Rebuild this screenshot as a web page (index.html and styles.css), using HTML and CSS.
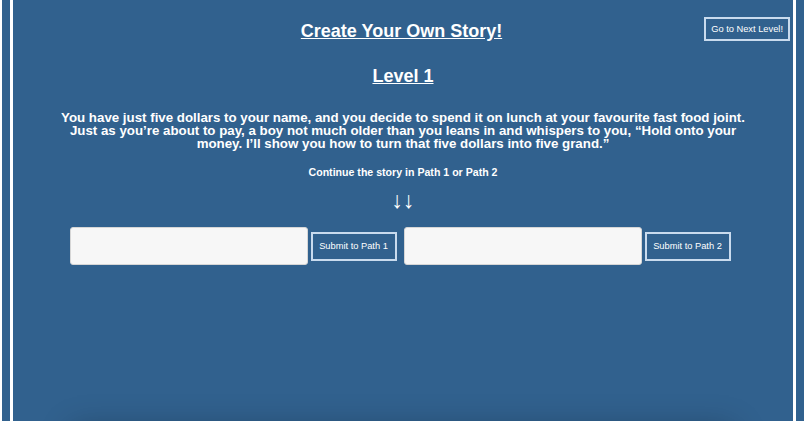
FILE: index.html
```html
<!DOCTYPE html>
<html lang="en">
<head>
    <meta charset="UTF-8">
    <meta name="viewport" content="width=device-width, initial-scale=1.0">
    <title>Create Your Own Story!</title>
    <link rel="stylesheet" href="styles.css">
</head>
<body>
    <div class="stage">
        <header class="top-bar">
            <h1>Create Your Own Story!</h1>
            <button type="button" class="btn next-btn">Go to Next Level!</button>
        </header>

        <h2>Level 1</h2>

        <p class="prompt">You have just five dollars to your name, and you decide to spend it on lunch at your favourite fast food joint. Just as you’re about to pay, a boy not much older than you leans in and whispers to you, “Hold onto your money. I’ll show you how to turn that five dollars into five grand.”</p>

        <p class="hint">Continue the story in Path 1 or Path 2</p>
        <div class="arrows">↓↓</div>

        <form class="paths" action="/submit" method="POST">
            <div class="path">
                <input type="text" name="path1">
                <button type="submit" class="btn">Submit to Path 1</button>
            </div>
            <div class="path">
                <input type="text" name="path2">
                <button type="submit" class="btn">Submit to Path 2</button>
            </div>
        </form>

        <div class="story-log"></div>
    </div>
</body>
</html>
```

FILE: styles.css
```css
body {
    font-family: "Liberation Sans", Arial, sans-serif;
    margin: 0;
    padding: 0 8px;
    background-color: #31618e;
    border-left: 2px solid #fff;
    border-right: 2px solid #fff;
    color: #fff;
}

.stage {
    border-left: 3px solid #fff;
    border-right: 3px solid #fff;
    padding-bottom: 40px;
}

.top-bar {
    display: grid;
    grid-template-columns: 1fr auto 1fr;
    align-items: start;
    padding: 17px 3px 0 0;
}

h1 {
    grid-column: 2;
    margin: 4px 0 0;
    font-size: 18px;
    line-height: 21px;
    text-decoration: underline;
}

h2 {
    margin: 24px 0 0;
    text-align: center;
    font-size: 18px;
    line-height: 21px;
    text-decoration: underline;
}

.btn {
    background: transparent;
    color: #fff;
    border: 2px solid #c9dbee;
    font-family: "Liberation Sans", Arial, sans-serif;
    font-size: 9.3px;
    cursor: pointer;
}

.next-btn {
    justify-self: end;
    height: 24px;
    padding: 0 5px;
}

.prompt {
    max-width: 700px;
    margin: 24px auto 0;
    text-align: center;
    font-weight: bold;
    font-size: 13.3px;
    line-height: 13px;
}

.hint {
    margin: 16px 0 0;
    text-align: center;
    font-weight: bold;
    font-size: 10.6px;
}

.arrows {
    margin-top: 11px;
    text-align: center;
    font-size: 23px;
    line-height: 22px;
}

.paths {
    display: flex;
    justify-content: center;
    gap: 7px;
    margin-top: 16px;
    padding-right: 6px;
}

.path {
    display: flex;
    align-items: center;
    gap: 3px;
}

.path input {
    width: 238px;
    height: 38px;
    box-sizing: border-box;
    background: #f7f7f7;
    border: 1px solid #d6d6d6;
    border-radius: 3px;
}

.path .btn {
    width: 86px;
    height: 29px;
    padding: 0;
}

.story-log {
    width: 662px;
    height: 200px;
    margin: 163px auto 0;
    box-shadow: 0 0 30px rgba(0, 0, 0, 0.28);
}
```
